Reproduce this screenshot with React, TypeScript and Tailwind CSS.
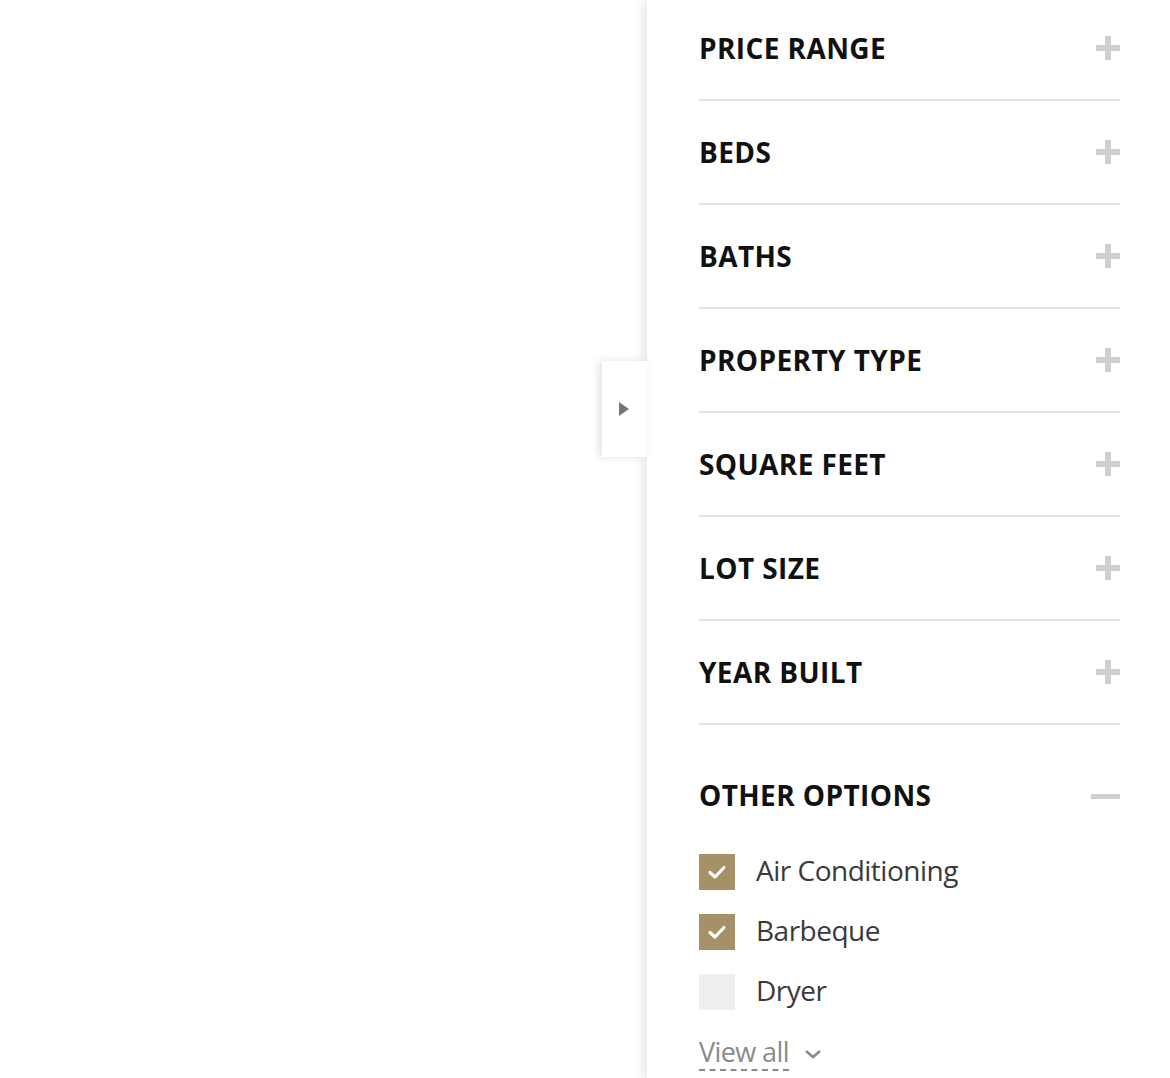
import React from "react";

const sections = ["PRICE RANGE", "BEDS", "BATHS", "PROPERTY TYPE", "SQUARE FEET", "LOT SIZE", "YEAR BUILT"];

function Plus() {
  return (
    <div className="relative w-[24px] h-[24px] shrink-0">
      <div className="absolute left-0 top-[9px] w-[24px] h-[6px] bg-[#d0d0d0]" />
      <div className="absolute left-[9px] top-0 w-[6px] h-[24px] bg-[#d0d0d0]" />
    </div>
  );
}

function Check({ checked, label }: { checked: boolean; label: string }) {
  return (
    <div className="flex items-center h-[36px]">
      <div
        className={
          "w-[36px] h-[36px] flex items-center justify-center shrink-0 " +
          (checked ? "bg-[#a69068]" : "bg-[#eeeeee]")
        }
      >
        {checked && (
          <svg width="20" height="16" viewBox="0 0 20 16" fill="none">
            <path d="M3 8.5 L8 13 L17 3.5" stroke="white" strokeWidth="3.2" strokeLinecap="round" strokeLinejoin="round" />
          </svg>
        )}
      </div>
      <span className="ml-[21px] text-[28px] leading-none text-[#3a3a3a] tracking-[-0.5px] -mt-[5px]">{label}</span>
    </div>
  );
}

export default function App() {
  return (
    <div className="w-[1170px] h-[1078px] bg-white flex overflow-hidden" style={{ fontFamily: '"Open Sans", sans-serif' }}>
      <div className="w-[647px] shrink-0 flex flex-col">
        <div className="mt-[361px] ml-[602px] w-[45px] h-[96px] bg-white shadow-[-3px_0_8px_rgba(0,0,0,0.12)] flex items-center justify-center relative z-10">
          <svg width="12" height="16" viewBox="0 0 12 16" className="ml-[-1px]">
            <path d="M1 1 L11 8 L1 15 Z" fill="#777" />
          </svg>
        </div>
      </div>
      <div className="flex-1 h-full bg-white shadow-[-4px_0_10px_rgba(0,0,0,0.10)] pl-[52px] pr-[50px] relative">
        {sections.map((s, i) => (
          <div
            key={s}
            className={
              "flex items-center justify-between border-b-2 border-[#e2e2e2] " +
              (i === 0 ? "h-[101px] pb-[4px]" : "h-[104px]")
            }
          >
            <span className="text-[28px] font-bold text-[#111] tracking-[0.4px] leading-none">{s}</span>
            <Plus />
          </div>
        ))}
        <div className="flex items-center justify-between h-[142px]">
          <span className="text-[28px] font-bold text-[#111] tracking-[0.4px] leading-none -mt-[2px]">OTHER OPTIONS</span>
          <div className="w-[29px] h-[5px] bg-[#d0d0d0]" />
        </div>
        <div className="-mt-[13px] flex flex-col gap-[24px]">
          <Check checked label="Air Conditioning" />
          <Check checked label="Barbeque" />
          <Check checked={false} label="Dryer" />
          <div className="flex items-center mt-[4px]">
            <span className="text-[27px] leading-none text-[#8a8a8a] tracking-[-0.6px] border-b-2 border-dashed border-[#8a8a8a] pb-[4px]">View all</span>
            <svg width="20" height="12" viewBox="0 0 20 12" className="ml-[14px] -mt-[2px]" fill="none">
              <path d="M3 3 L10 9 L17 3" stroke="#8a8a8a" strokeWidth="2.5" />
            </svg>
          </div>
        </div>
      </div>
    </div>
  );
}
